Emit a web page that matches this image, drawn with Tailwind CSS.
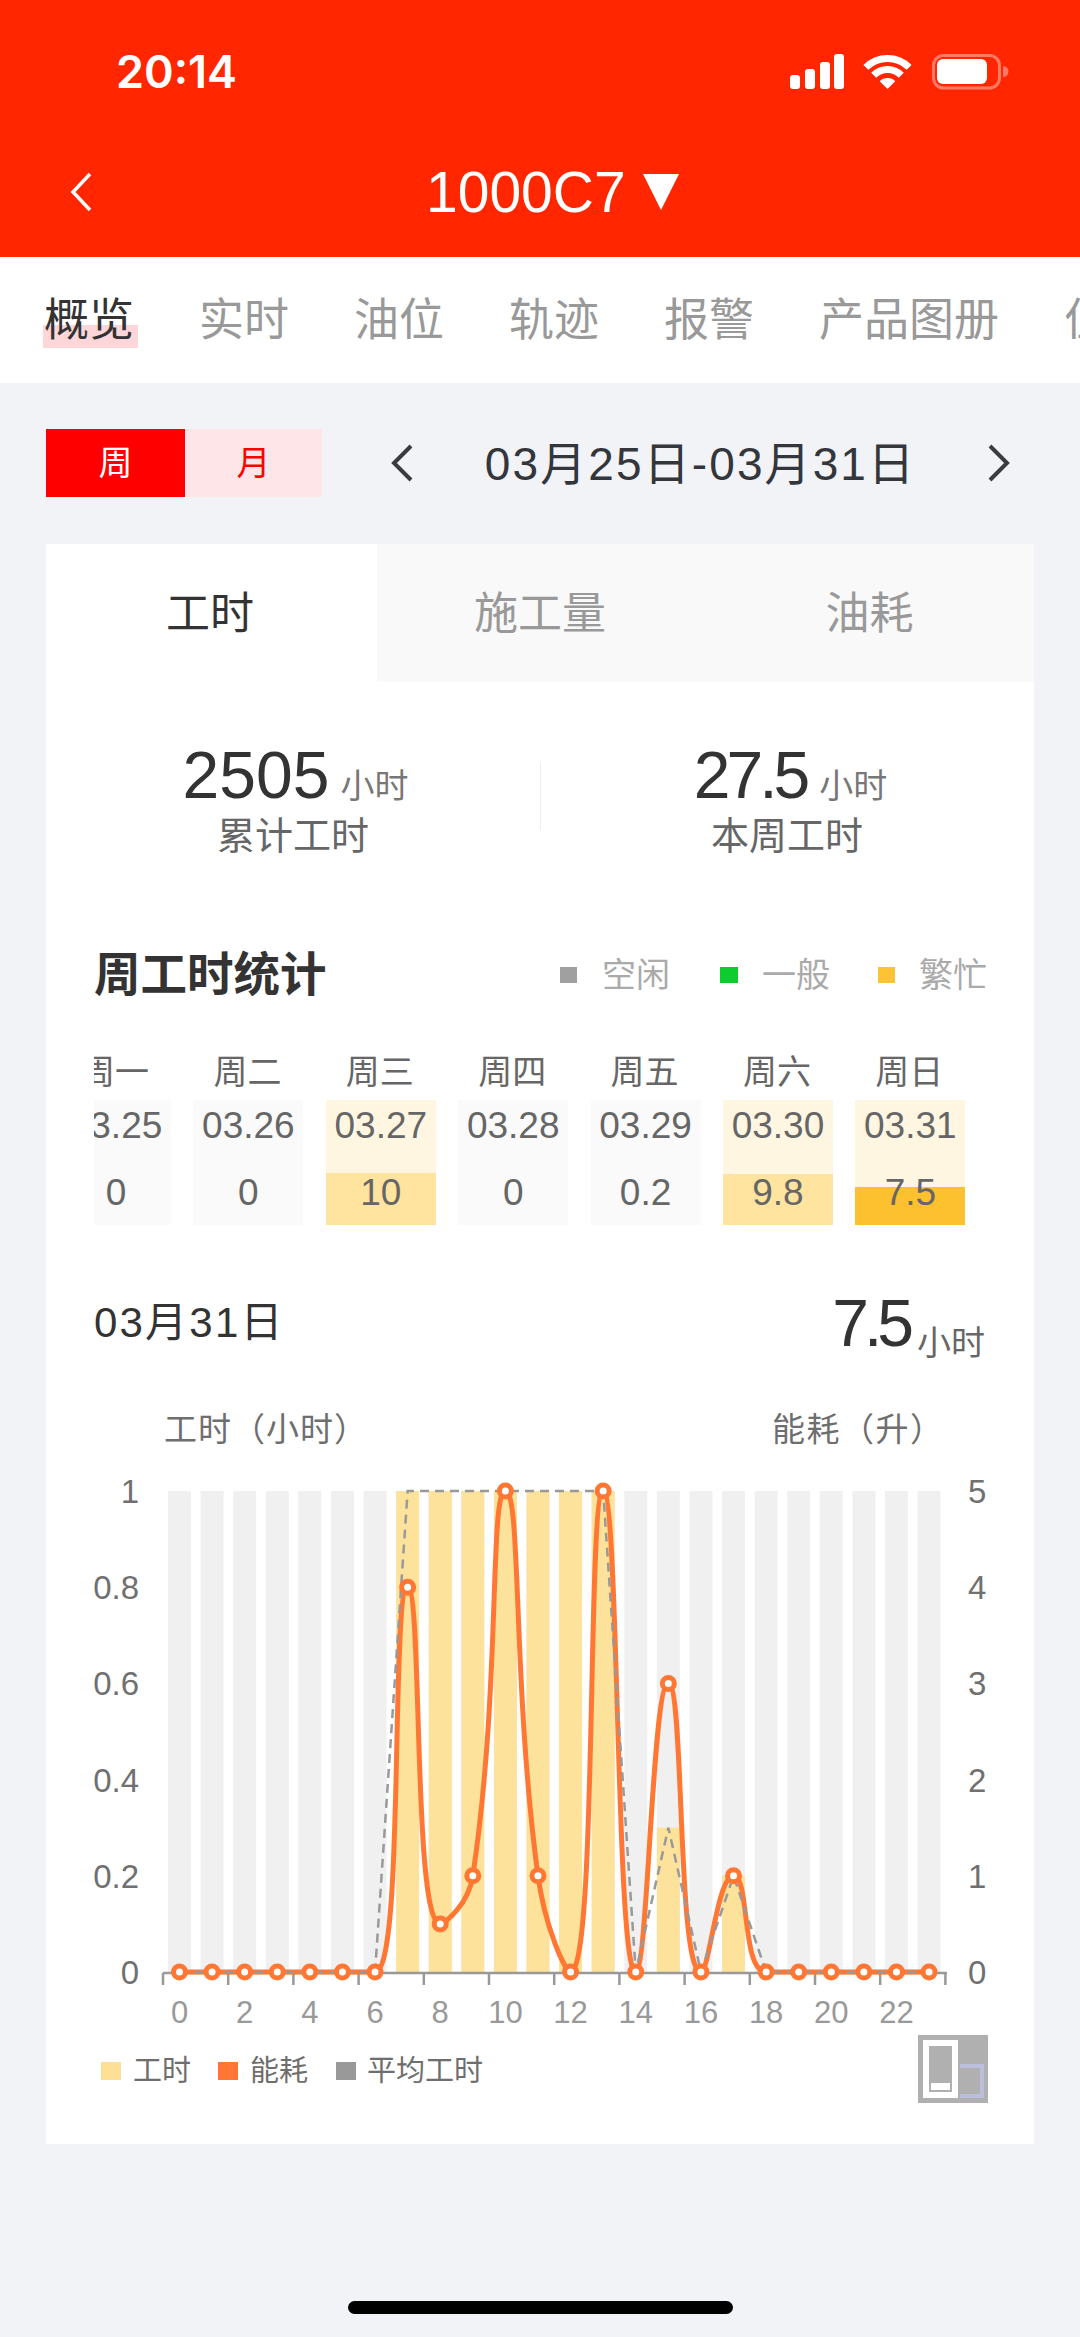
<!DOCTYPE html>
<html lang="zh-CN">
<head>
    <meta charset="UTF-8">
    <meta name="viewport" content="width=device-width, initial-scale=1.0">
    <title>1000C7</title>
    <script src="https://cdn.jsdelivr.net/npm/@tailwindcss/browser@4"></script>
</head>
<body class="bg-[#f2f3f7] font-['Liberation_Sans','Noto_Sans_CJK_SC',sans-serif] w-[1080px] h-[2337px] overflow-hidden relative">

    <!-- Red header -->
    <header class="h-[257px] bg-[#ff2600] text-white pt-[40px]">
        <div class="h-[62px] flex items-center justify-between pl-[116px] pr-[70px]">
            <span class="font-['Inter',sans-serif] font-semibold text-[45px] leading-none">20:14</span>
            <svg width="220" height="42" viewBox="790 50 220 42">
                <rect x="790" y="75" width="10" height="14" rx="3" fill="#fff"/>
                <rect x="805" y="69" width="10" height="20" rx="3" fill="#fff"/>
                <rect x="820" y="62" width="10" height="27" rx="3" fill="#fff"/>
                <rect x="834" y="54" width="10" height="35" rx="3" fill="#fff"/>
                <path d="M865.9 67.4A30.5 30.5 0 0 1 909.1 67.4M873.7 75.2A19.5 19.5 0 0 1 901.3 75.2" fill="none" stroke="#fff" stroke-width="7"/>
                <path d="M887.5 89L879.7 81.2A11 11 0 0 1 895.3 81.2Z" fill="#fff"/>
                <rect x="933.5" y="55.5" width="66" height="32.5" rx="10" fill="none" stroke="#ff7a66" stroke-width="3"/>
                <rect x="937" y="59" width="50" height="25" rx="6" fill="#fff"/>
                <path d="M1003 66A5 5 0 0 1 1003 77Z" fill="#ff7a66"/>
            </svg>
        </div>
        <div class="mt-[50px] h-[80px] flex items-center pl-[70px]">
            <svg width="22" height="40" viewBox="0 0 22 40"><path d="M20 2L3 20L20 38" fill="none" stroke="#fff" stroke-width="3.5"/></svg>
            <span class="ml-[334px] text-[57px] leading-none">1000C7</span>
            <svg class="ml-[17px]" width="36" height="36" viewBox="0 0 36 36"><path d="M0 0H36L18 36Z" fill="#fff"/></svg>
        </div>
    </header>

    <!-- Tab row -->
    <nav class="relative h-[126px] bg-white flex items-center gap-[65px] pl-[44px] overflow-hidden text-[45px] leading-none text-[#999] whitespace-nowrap">
        <span class="absolute left-[43px] top-[68px] w-[95px] h-[23px] bg-[#fcd6d9]"></span>
        <span class="relative text-[#333] shrink-0">概览</span>
        <span class="shrink-0">实时</span>
        <span class="shrink-0">油位</span>
        <span class="shrink-0">轨迹</span>
        <span class="shrink-0">报警</span>
        <span class="shrink-0">产品图册</span>
        <span class="shrink-0">位置</span>
    </nav>

    <!-- Week / month switch + date range -->
    <div class="mt-[46px] ml-[46px] h-[68px] flex items-center">
        <div class="flex text-[34px] leading-none">
            <span class="w-[139px] h-[68px] bg-[#ff0000] text-white flex items-center justify-center">周</span>
            <span class="w-[137px] h-[68px] bg-[#fee6e8] text-[#ff0000] flex items-center justify-center">月</span>
        </div>
        <div class="ml-[69px] w-[619px] flex items-center justify-between text-[#33363b]">
            <svg width="22" height="38" viewBox="0 0 22 38"><path d="M20 2L3 19L20 36" fill="none" stroke="#3a3c40" stroke-width="4"/></svg>
            <span class="text-[46px] leading-none tracking-[2.1px] translate-y-[1px]">03月25日-03月31日</span>
            <svg width="22" height="38" viewBox="0 0 22 38"><path d="M2 2L19 19L2 36" fill="none" stroke="#3a3c40" stroke-width="4"/></svg>
        </div>
    </div>

    <!-- Card -->
    <main class="mt-[47px] mx-[46px] w-[988px] h-[1600px] bg-white">
        <div class="h-[138px] flex text-[44px] leading-none text-[#999]">
            <div class="w-[331px] pr-[3px] pt-[2px] flex items-center justify-center text-[#333]">工时</div>
            <div class="w-[329px] pr-[3px] pt-[2px] bg-[#f9f9f9] flex items-center justify-center">施工量</div>
            <div class="w-[328px] pr-[1px] pt-[2px] bg-[#f9f9f9] flex items-center justify-center">油耗</div>
        </div>

        <!-- Totals -->
        <div class="relative mt-[61px] flex">
            <div class="w-[494px] flex flex-col items-center">
                <div class="h-[64px] pl-[5px] flex items-baseline">
                    <span class="text-[66px] leading-[64px] text-[#333]">2505</span>
                    <span class="ml-[11px] text-[34px] leading-none text-[#777]">小时</span>
                </div>
                <div class="mt-[9px] h-[40px] flex items-center text-[38px] leading-none text-[#666]">累计工时</div>
            </div>
            <span class="absolute left-[494px] top-[20px] w-[1px] h-[67px] bg-[#eeeeee]"></span>
            <div class="w-[494px] flex flex-col items-center">
                <div class="h-[64px] pl-[7px] flex items-baseline">
                    <span class="text-[66px] leading-[64px] text-[#333] tracking-[-4px]">27.5</span>
                    <span class="ml-[13px] text-[34px] leading-none text-[#777]">小时</span>
                </div>
                <div class="mt-[9px] h-[40px] flex items-center text-[38px] leading-none text-[#666]">本周工时</div>
            </div>
        </div>

        <!-- Weekly stats heading -->
        <div class="mt-[89px] h-[60px] pl-[48px] pr-[47px] flex items-center justify-between">
            <h2 class="text-[46.5px] leading-none font-bold text-[#333]">周工时统计</h2>
            <div class="flex items-center text-[34px] leading-none text-[#aaaaaa]">
                <span class="w-[17px] h-[16px] bg-[#a0a0a0]"></span>
                <span class="ml-[25px]">空闲</span>
                <span class="ml-[50px] w-[18px] h-[16px] bg-[#0ccc2e]"></span>
                <span class="ml-[24px]">一般</span>
                <span class="ml-[48px] w-[17px] h-[16px] bg-[#fcc333]"></span>
                <span class="ml-[24px]">繁忙</span>
            </div>
        </div>

        <!-- Week strip, scrolled a little so Monday is clipped -->
        <div class="mt-[45px] ml-[48px] w-[892px] overflow-hidden">
            <div class="flex gap-[22.4px] ml-[-33px] w-max text-[#666] text-center">
                <div class="w-[110px]">
                    <div class="h-[44px] mb-[6px] pr-[2px] flex items-center justify-center text-[34px] leading-none">周一</div>
                    <div class="relative h-[125px] bg-[#fafafa] text-[37px] leading-[36px]"><div class="pt-[8px]">03.25</div><div class="mt-[31px]">0</div></div>
                </div>
                <div class="w-[110px]">
                    <div class="h-[44px] mb-[6px] pr-[2px] flex items-center justify-center text-[34px] leading-none">周二</div>
                    <div class="relative h-[125px] bg-[#fafafa] text-[37px] leading-[36px]"><div class="pt-[8px]">03.26</div><div class="mt-[31px]">0</div></div>
                </div>
                <div class="w-[110px]">
                    <div class="h-[44px] mb-[6px] pr-[2px] flex items-center justify-center text-[34px] leading-none">周三</div>
                    <div class="relative h-[125px] bg-[#fff6e2] text-[37px] leading-[36px]">
                        <span class="absolute inset-x-0 bottom-0 h-[52px] bg-[#ffe49f]"></span>
                        <div class="relative pt-[8px]">03.27</div><div class="relative mt-[31px]">10</div>
                    </div>
                </div>
                <div class="w-[110px]">
                    <div class="h-[44px] mb-[6px] pr-[2px] flex items-center justify-center text-[34px] leading-none">周四</div>
                    <div class="relative h-[125px] bg-[#fafafa] text-[37px] leading-[36px]"><div class="pt-[8px]">03.28</div><div class="mt-[31px]">0</div></div>
                </div>
                <div class="w-[110px]">
                    <div class="h-[44px] mb-[6px] pr-[2px] flex items-center justify-center text-[34px] leading-none">周五</div>
                    <div class="relative h-[125px] bg-[#fafafa] text-[37px] leading-[36px]"><div class="pt-[8px]">03.29</div><div class="mt-[31px]">0.2</div></div>
                </div>
                <div class="w-[110px]">
                    <div class="h-[44px] mb-[6px] pr-[2px] flex items-center justify-center text-[34px] leading-none">周六</div>
                    <div class="relative h-[125px] bg-[#fff6e2] text-[37px] leading-[36px]">
                        <span class="absolute inset-x-0 bottom-0 h-[51px] bg-[#ffe49f]"></span>
                        <div class="relative pt-[8px]">03.30</div><div class="relative mt-[31px]">9.8</div>
                    </div>
                </div>
                <div class="w-[110px]">
                    <div class="h-[44px] mb-[6px] pr-[2px] flex items-center justify-center text-[34px] leading-none">周日</div>
                    <div class="relative h-[125px] bg-[#fff6e2] text-[37px] leading-[36px]">
                        <span class="absolute inset-x-0 bottom-0 h-[38px] bg-[#fdc02f]"></span>
                        <div class="relative pt-[8px]">03.31</div><div class="relative mt-[31px]">7.5</div>
                    </div>
                </div>
            </div>
        </div>

        <!-- Selected day -->
        <div class="mt-[68px] h-[60px] pl-[48px] pr-[49px] flex items-center justify-between text-[#333]">
            <span class="text-[42px] leading-none tracking-[2.2px]">03月31日</span>
            <div class="flex items-baseline">
                <span class="text-[66px] leading-[60px] tracking-[-5px]">7.5</span>
                <span class="ml-[8px] text-[34px] leading-none text-[#666] translate-y-[9px]">小时</span>
            </div>
        </div>

        <!-- Chart -->
        <svg id="chart" class="block mt-[47px]" width="988" height="744" viewBox="46 1400 988 744" font-size="31">
            <g id="grey"></g>
            <g id="yellow"></g>
            <g fill="#6e6e6e" font-size="33">
                <text x="164" y="1441" letter-spacing="1">工时（小时）</text>
                <text x="772" y="1441" letter-spacing="1.5">能耗（升）</text>
            </g>
            <g id="axis"></g>
            <path id="energy" fill="none" stroke="#ff7733" stroke-width="5"/>
            <polyline id="avg" fill="none" stroke="#999" stroke-width="2.5" stroke-dasharray="9 6"/>
            <g id="dots"></g>
            <g font-size="29" fill="#6e6e6e">
                <rect x="101" y="2062" width="20" height="18" fill="#fddf95"/>
                <text x="133" y="2081">工时</text>
                <rect x="218" y="2062" width="20" height="18" fill="#ff7733"/>
                <text x="250" y="2081">能耗</text>
                <rect x="336" y="2062" width="20" height="18" fill="#999"/>
                <text x="367" y="2081">平均工时</text>
            </g>
            <!-- data zoom thumbnail -->
            <rect x="918" y="2035" width="70" height="68" fill="#b0b0b0"/>
            <path d="M960 2066H982V2096H960" fill="none" stroke="#bcbfdc" stroke-width="4"/>
            <rect x="923" y="2040" width="35" height="58" fill="#fff"/>
            <rect x="929" y="2046" width="23" height="46" fill="#b0b0b0"/>
            <rect x="931" y="2083" width="19" height="7" fill="#fff"/>
        </svg>
    </main>

    <!-- Home indicator -->
    <div class="absolute left-[348px] top-[2301px] w-[385px] h-[13px] rounded-full bg-black"></div>

    <script>
        const NS = 'http://www.w3.org/2000/svg';
        const X0 = 179.5, STEP = 32.59, BASE = 1972, FULL = 481;
        const hx = h => X0 + STEP * h;
        const vy = v => BASE - FULL * v;

        function add(parent, tag, attrs, text) {
            const el = document.createElementNS(NS, tag);
            Object.keys(attrs).forEach(k => el.setAttribute(k, attrs[k]));
            if (text !== undefined) el.textContent = text;
            document.getElementById(parent).appendChild(el);
        }

        // hours, 0-1 axis
        const hours = Array(24).fill(0);
        [7, 8, 9, 10, 11, 12, 13].forEach(h => hours[h] = 1);
        hours[15] = 0.3;
        hours[17] = 0.2;

        // fuel, 0-5 axis
        const fuel = Array(24).fill(0);
        fuel[7] = 4; fuel[8] = 0.5; fuel[9] = 1; fuel[10] = 5; fuel[11] = 1;
        fuel[13] = 5; fuel[15] = 3; fuel[17] = 1;

        hours.forEach((v, h) => {
            add('grey', 'rect', { x: hx(h) - 11.5, y: BASE - FULL, width: 23, height: FULL, fill: '#f0f0f0' });
            if (v > 0) add('yellow', 'rect', { x: hx(h) - 11.5, y: vy(v), width: 23, height: FULL * v, fill: '#fde29b' });
        });

        // axis line, ticks and labels
        add('axis', 'path', { d: 'M163 1973H947', stroke: '#999', 'stroke-width': 2.5, fill: 'none' });
        for (let i = 0; i <= 12; i++) {
            const x = 163 + 65.2 * i;
            add('axis', 'path', { d: `M${x} 1973V1985`, stroke: '#999', 'stroke-width': 2.5 });
            if (i < 12) add('axis', 'text', { x: hx(i * 2), y: 2023, 'text-anchor': 'middle', fill: '#999' }, i * 2);
        }
        ['0', '0.2', '0.4', '0.6', '0.8', '1'].forEach((t, i) => {
            add('axis', 'text', { x: 139, y: vy(i / 5) + 12, 'text-anchor': 'end', fill: '#707070', 'font-size': 33 }, t);
            add('axis', 'text', { x: 968, y: vy(i / 5) + 12, fill: '#707070', 'font-size': 33 }, i);
        });

        document.getElementById('avg').setAttribute('points', hours.map((v, h) => `${hx(h)},${vy(v)}`).join(' '));

        // same curve smoothing the chart library applies (smooth = 0.5)
        const pts = fuel.map((v, h) => [hx(h), vy(v / 5)]);
        function smoothPath(p, s) {
            let d = `M${p[0][0]} ${p[0][1]}`;
            let cp0 = p[0].slice();
            for (let i = 1; i < p.length; i++) {
                const cur = p[i], prev = p[i - 1], next = p[i + 1];
                let c0, c1next;
                if (!next) {
                    c0 = cur; c1next = cur;
                } else {
                    const lenPrev = Math.hypot(cur[0] - prev[0], cur[1] - prev[1]);
                    const lenNext = Math.hypot(next[0] - cur[0], next[1] - cur[1]);
                    const r = lenNext / (lenNext + lenPrev);
                    const clamp = (v, a, b) => Math.min(Math.max(v, Math.min(a, b)), Math.max(a, b));
                    let nx = cur[0] + (next[0] - prev[0]) * s * r;
                    let ny = cur[1] + (next[1] - prev[1]) * s * r;
                    nx = clamp(nx, cur[0], next[0]);
                    ny = clamp(ny, cur[1], next[1]);
                    let vx = nx - cur[0], vy2 = ny - cur[1];
                    let px = cur[0] - vx * lenPrev / lenNext;
                    let py = cur[1] - vy2 * lenPrev / lenNext;
                    px = clamp(px, cur[0], prev[0]);
                    py = clamp(py, cur[1], prev[1]);
                    vx = cur[0] - px; vy2 = cur[1] - py;
                    c0 = [px, py];
                    c1next = [cur[0] + vx * lenNext / lenPrev, cur[1] + vy2 * lenNext / lenPrev];
                }
                d += `C${cp0[0]} ${cp0[1]} ${c0[0]} ${c0[1]} ${cur[0]} ${cur[1]}`;
                cp0 = c1next;
            }
            return d;
        }
        document.getElementById('energy').setAttribute('d', smoothPath(pts, 0.5));

        pts.forEach(p => add('dots', 'circle', { cx: p[0], cy: p[1], r: 6, fill: '#fff', stroke: '#ff7733', 'stroke-width': 5 }));
    </script>
</body>
</html>
